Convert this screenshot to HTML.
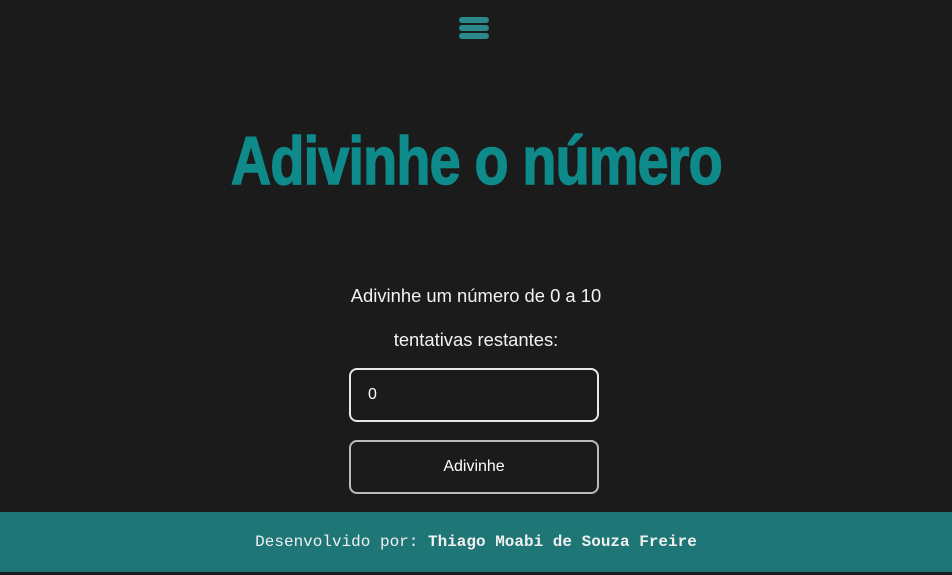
<!DOCTYPE html>
<html><head><style>
html,body{margin:0;padding:0;}
body{width:952px;height:575px;background:#1b1b1b;position:relative;overflow:hidden;font-family:"Liberation Sans",sans-serif;}
.menu{position:absolute;left:459px;top:17px;width:30px;}
.menu div{height:6px;background:#2a8a8a;border-radius:3px;margin-bottom:2px;}
h1{position:absolute;left:0;width:952px;top:118px;margin:0;text-align:center;}
h1 span{display:inline-block;font-size:68px;font-weight:bold;color:#0e8a8a;transform:scaleX(0.82);transform-origin:center;letter-spacing:-1px;line-height:86px;-webkit-text-stroke:1.5px #0e8a8a;}
.p{position:absolute;left:0;width:952px;text-align:center;color:#f2f2f2;font-size:18.4px;}
.box{position:absolute;left:349px;width:246px;height:50px;border:2px solid #e8e8e8;border-radius:8px;color:#fff;font-size:16px;}
footer{position:absolute;left:0;top:512px;width:952px;height:60px;background:#1f7676;color:#f0f0f0;font-family:"Liberation Mono",monospace;font-size:16px;text-align:center;line-height:60px;}
</style></head><body>
<div class="menu"><div></div><div></div><div></div></div>
<h1><span>Adivinhe o número</span></h1>
<div class="p" style="top:285px">Adivinhe um número de 0 a 10</div>
<div class="p" style="top:329px">tentativas restantes:</div>
<div class="box" style="top:368px;line-height:50px;"><span style="padding-left:17px">0</span></div>
<div class="box" style="top:440px;line-height:50px;text-align:center;border-color:#bbb;">Adivinhe</div>
<footer>Desenvolvido por: <b>Thiago Moabi de Souza Freire</b></footer>
</body></html>
